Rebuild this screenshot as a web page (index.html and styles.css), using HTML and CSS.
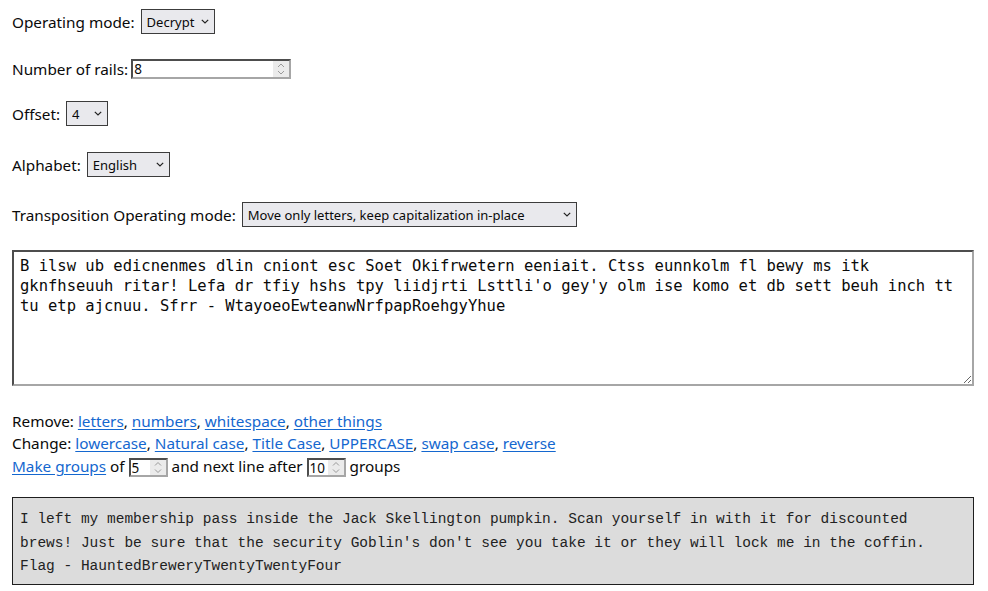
FILE: index.html
```html
<!DOCTYPE html>
<html lang="en">
<head>
<meta charset="utf-8">
<title>Rail fence cipher</title>
<link rel="stylesheet" href="styles.css">
</head>
<body>
<div class="page">
  <div class="form">
    <div class="row row-mode">
      <span class="lbl">Operating mode:</span>
      <span class="sel sel-mode">
        <select><option>Decrypt</option><option>Encrypt</option></select>
        <svg class="chev" width="8" height="5" viewBox="0 0 8 5"><path d="M0.8 0.8 L4 4 L7.2 0.8" fill="none" stroke="#222" stroke-width="1.2"/></svg>
      </span>
    </div>
    <div class="row row-rails">
      <span class="lbl">Number of rails:</span>
      <span class="num num-rails">
        <input type="text" value="8">
        <svg class="spin" width="16" height="16" viewBox="0 0 16 16"><rect width="16" height="16" fill="#ebebeb"/><path d="M5 6 L8 3 L11 6" fill="none" stroke="#9a9a9a" stroke-width="1"/><path d="M5 10 L8 13 L11 10" fill="none" stroke="#9a9a9a" stroke-width="1"/></svg>
      </span>
    </div>
    <div class="row row-offset">
      <span class="lbl">Offset:</span>
      <span class="sel sel-offset">
        <select><option>4</option></select>
        <svg class="chev" width="8" height="5" viewBox="0 0 8 5"><path d="M0.8 0.8 L4 4 L7.2 0.8" fill="none" stroke="#222" stroke-width="1.2"/></svg>
      </span>
    </div>
    <div class="row row-alpha">
      <span class="lbl">Alphabet:</span>
      <span class="sel sel-alpha">
        <select><option>English</option></select>
        <svg class="chev" width="8" height="5" viewBox="0 0 8 5"><path d="M0.8 0.8 L4 4 L7.2 0.8" fill="none" stroke="#222" stroke-width="1.2"/></svg>
      </span>
    </div>
    <div class="row row-trans">
      <span class="lbl">Transposition Operating mode:</span>
      <span class="sel sel-trans">
        <select><option>Move only letters, keep capitalization in-place</option></select>
        <svg class="chev" width="8" height="5" viewBox="0 0 8 5"><path d="M0.8 0.8 L4 4 L7.2 0.8" fill="none" stroke="#222" stroke-width="1.2"/></svg>
      </span>
    </div>
  </div>

  <textarea class="input-text" spellcheck="false">B ilsw ub edicnenmes dlin cniont esc Soet Okifrwetern eeniait. Ctss eunnkolm fl bewy ms itk gknfhseuuh ritar! Lefa dr tfiy hshs tpy liidjrti Lsttli'o gey'y olm ise komo et db sett beuh inch tt tu etp ajcnuu. Sfrr - WtayoeoEwteanwNrfpapRoehgyYhue</textarea>

  <div class="tools">
    <div class="tline">Remove: <a href="#">letters</a>, <a href="#">numbers</a>, <a href="#">whitespace</a>, <a href="#">other things</a></div>
    <div class="tline">Change: <a href="#">lowercase</a>, <a href="#">Natural case</a>, <a href="#">Title Case</a>, <a href="#">UPPERCASE</a>, <a href="#">swap case</a>, <a href="#">reverse</a></div>
    <div class="tline"><a href="#">Make groups</a> of <span class="num num-small"><input type="text" value="5"><svg class="spin" width="16" height="15" viewBox="0 0 16 15"><rect width="16" height="15" fill="#ebebeb"/><path d="M5 5.5 L8 2.5 L11 5.5" fill="none" stroke="#9a9a9a" stroke-width="1"/><path d="M5 9.5 L8 12.5 L11 9.5" fill="none" stroke="#9a9a9a" stroke-width="1"/></svg></span> and next line after <span class="num num-small"><input type="text" value="10"><svg class="spin" width="16" height="15" viewBox="0 0 16 15"><rect width="16" height="15" fill="#ebebeb"/><path d="M5 5.5 L8 2.5 L11 5.5" fill="none" stroke="#9a9a9a" stroke-width="1"/><path d="M5 9.5 L8 12.5 L11 9.5" fill="none" stroke="#9a9a9a" stroke-width="1"/></svg></span> groups</div>
  </div>

  <div class="output">I left my membership pass inside the Jack Skellington pumpkin. Scan yourself in with it for discounted<br>brews! Just be sure that the security Goblin's don't see you take it or they will lock me in the coffin.<br>Flag - HauntedBreweryTwentyTwentyFour</div>
</div>
</body>
</html>
```

FILE: styles.css
```css
html, body {
  margin: 0;
  padding: 0;
  background: #fff;
}

body {
  font-family: "Noto Sans", sans-serif;
  font-size: 15.3px;
  color: #0a0a0a;
}

.page {
  padding: 9px 14px 0 12px;
  display: flex;
  flex-direction: column;
}

.form {
  display: flex;
  flex-direction: column;
  gap: 25px;
}

.row {
  display: flex;
  align-items: center;
  height: 25px;
  white-space: nowrap;
}

.row-rails { height: 20px; }
.row-offset { margin-top: -3px; }
.row-alpha { margin-top: 1px; }

.lbl { margin-right: 6px; }
.row-rails .lbl { margin-right: 3px; }

.sel {
  position: relative;
  display: inline-block;
  height: 25px;
}

.sel select {
  appearance: none;
  -webkit-appearance: none;
  box-sizing: border-box;
  height: 25px;
  margin: 0;
  padding: 0 18px 0 5px;
  border: 1px solid #3c3c3c;
  border-radius: 0;
  background: #e9e9ed;
  color: #0a0a0a;
  font-family: "Noto Sans", sans-serif;
  font-size: 13px;
  outline: none;
}

.sel .chev {
  position: absolute;
  right: 6px;
  top: 10px;
  pointer-events: none;
}

.sel-mode select { width: 74px; }
.sel-offset select { width: 42px; }
.sel-alpha select { width: 83px; }
.sel-trans select { width: 335px; }

.num {
  display: inline-flex;
  align-items: stretch;
  box-sizing: border-box;
  border-style: solid;
  border-width: 2px;
  border-color: #4d4d4d #a6a6a6 #a6a6a6 #4d4d4d;
  background: #fff;
  vertical-align: middle;
}

.num input {
  border: 0;
  padding: 0 0 0 1px;
  margin: 0;
  outline: none;
  background: transparent;
  font-family: "Noto Sans", sans-serif;
  font-size: 13.5px;
  color: #0a0a0a;
  min-width: 0;
  flex: 1;
}

.num .spin { flex: none; display: block; }

.num-rails { width: 160px; height: 20px; }
.num-small { width: 39px; height: 19px; }

.input-text {
  box-sizing: border-box;
  display: block;
  width: 962px;
  height: 136px;
  margin: 23px 0 0 0;
  padding: 4px 6px;
  border-style: solid;
  border-width: 2px;
  border-color: #4d4d4d #a6a6a6 #a6a6a6 #4d4d4d;
  font-family: "DejaVu Sans Mono", monospace;
  font-size: 15.5px;
  line-height: 20px;
  color: #0a0a0a;
  resize: both;
  outline: none;
}

.tools {
  margin-top: 24px;
  line-height: 22.3px;
}

.tline { white-space: nowrap; }

.tools a {
  color: #1467cf;
  text-decoration: underline;
  text-underline-offset: 2px;
}

.output {
  margin-top: 20px;
  box-sizing: border-box;
  width: 962px;
  height: 88px;
  padding: 10px 7px 6px;
  border: 1px solid #1e1e1e;
  background: #dcdcdc;
  color: #222;
  font-family: "Liberation Mono", monospace;
  font-size: 14.5px;
  line-height: 23.5px;
  white-space: nowrap;
}
```
